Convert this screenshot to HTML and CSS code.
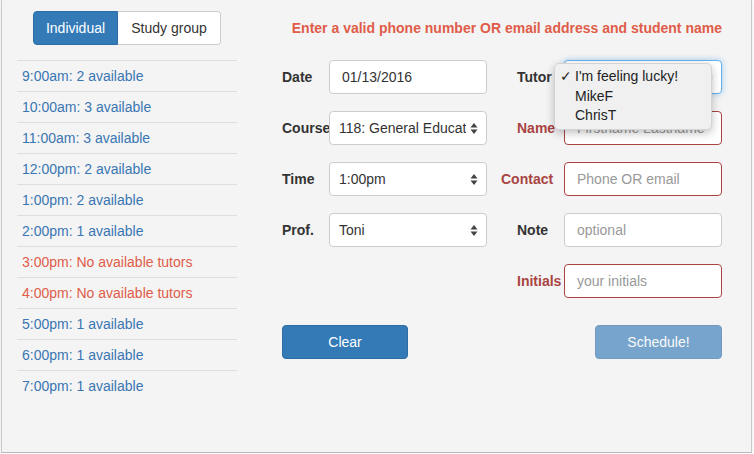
FILE: index.html
```html
<!DOCTYPE html>
<html>
<head>
<meta charset="utf-8">
<link rel="stylesheet" href="styles.css">
</head>
<body>
<div class="panel">
  <div class="sidebar">
    <div class="toggle">
      <span class="tbtn active">Individual</span>
      <span class="tbtn">Study group</span>
    </div>
    <ul class="slots">
      <li>9:00am: 2 available</li>
      <li>10:00am: 3 available</li>
      <li>11:00am: 3 available</li>
      <li>12:00pm: 2 available</li>
      <li>1:00pm: 2 available</li>
      <li>2:00pm: 1 available</li>
      <li class="none">3:00pm: No available tutors</li>
      <li class="none">4:00pm: No available tutors</li>
      <li>5:00pm: 1 available</li>
      <li>6:00pm: 1 available</li>
      <li>7:00pm: 1 available</li>
    </ul>
  </div>
  <div class="main">
    <div class="msg">Enter a valid phone number OR email address and student name</div>
    <div class="form">
      <div class="col">
        <div class="row"><label>Date</label><input class="field" type="text" value="01/13/2016"></div>
        <div class="row"><label>Course</label><div class="field select"><span class="val">118: General Educat</span><svg class="arr" width="8" height="13" viewBox="0 0 8 13"><path d="M4 1 L7.5 5.5 H0.5 Z M4 12 L7.5 7.5 H0.5 Z" fill="#444"/></svg></div></div>
        <div class="row"><label>Time</label><div class="field select"><span class="val">1:00pm</span><svg class="arr" width="8" height="13" viewBox="0 0 8 13"><path d="M4 1 L7.5 5.5 H0.5 Z M4 12 L7.5 7.5 H0.5 Z" fill="#444"/></svg></div></div>
        <div class="row"><label>Prof.</label><div class="field select"><span class="val">Toni</span><svg class="arr" width="8" height="13" viewBox="0 0 8 13"><path d="M4 1 L7.5 5.5 H0.5 Z M4 12 L7.5 7.5 H0.5 Z" fill="#444"/></svg></div></div>
      </div>
      <div class="col right">
        <div class="row tutor-row"><label>Tutor</label><div class="field select focus"><span class="val">I'm feeling lucky!</span><svg class="arr" width="8" height="13" viewBox="0 0 8 13"><path d="M4 1 L7.5 5.5 H0.5 Z M4 12 L7.5 7.5 H0.5 Z" fill="#444"/></svg></div>
          <ul class="popup">
            <li><span class="check">✓</span>I'm feeling lucky!</li>
            <li><span class="check"></span>MikeF</li>
            <li><span class="check"></span>ChrisT</li>
          </ul>
        </div>
        <div class="row err"><label>Name</label><input class="field" type="text" placeholder="Firstname Lastname"></div>
        <div class="row err"><label class="wide">Contact</label><input class="field" type="text" placeholder="Phone OR email"></div>
        <div class="row"><label>Note</label><input class="field" type="text" placeholder="optional"></div>
        <div class="row err"><label>Initials</label><input class="field" type="text" placeholder="your initials"></div>
      </div>
    </div>
    <div class="actions">
      <button class="btn">Clear</button>
      <button class="btn disabled">Schedule!</button>
    </div>
  </div>
</div>
</body>
</html>
```
FILE: styles.css
```css
* { box-sizing: border-box; }
html, body { margin: 0; padding: 0; background: #fff; }
body {
  font-family: "Liberation Sans", Arial, Helvetica, sans-serif;
  font-size: 14px;
  color: #333;
}
.panel {
  margin-left: 1px;
  width: 751px;
  height: 453px;
  background: #f4f4f4;
  border-left: 1px solid #c9c9c9;
  border-right: 1px solid #c9c9c9;
  border-bottom: 1px solid #b9b9b9;
  box-shadow: 0 1px 2px rgba(0,0,0,0.15);
  display: flex;
}
.sidebar {
  width: 220px;
  margin-left: 15px;
  padding-top: 11px;
}
.toggle {
  display: flex;
  justify-content: center;
  height: 34px;
}
.tbtn {
  display: flex;
  align-items: center;
  justify-content: center;
  height: 34px;
  border: 1px solid #ccc;
  background: #fff;
  color: #333;
}
.tbtn:first-child { width: 85px; border-radius: 4px 0 0 4px; }
.tbtn:last-child { width: 103px; border-radius: 0 4px 4px 0; border-left: none; }
.tbtn.active { background: #337ab7; border-color: #2e6da4; color: #fff; }
.slots {
  list-style: none;
  margin: 15px 0 0;
  padding: 0;
}
.slots li {
  border-top: 1px solid #ddd;
  height: 31px;
  line-height: 30px;
  padding-left: 5px;
  color: #3a76b3;
}
.slots li.none { color: #df5c49; }
.main {
  margin-left: 45px;
  width: 440px;
  padding-top: 18px;
}
.msg {
  text-align: right;
  font-weight: bold;
  color: #df5c49;
  height: 20px;
  line-height: 20px;
  white-space: nowrap;
}
.form {
  display: flex;
  gap: 30px;
  margin-top: 22px;
}
.col {
  display: flex;
  flex-direction: column;
  gap: 17px;
}
.row {
  display: flex;
  align-items: center;
  height: 34px;
  position: relative;
}
.row label {
  width: 47px;
  flex: none;
  font-weight: bold;
  white-space: nowrap;
  color: #333;
}
.row label.wide { margin-left: -16px; width: 63px; }
.row.err label { color: #a94442; }
.field {
  width: 158px;
  height: 34px;
  flex: none;
  border: 1px solid #ccc;
  border-radius: 4px;
  background: #fff;
  font-family: inherit;
  font-size: 14px;
  color: #333;
  padding: 0 12px;
  outline: none;
}
.field::placeholder { color: #999; }
.row.err .field { border-color: #a94442; }
.select {
  display: flex;
  align-items: center;
  padding: 0 8px 0 9px;
  overflow: hidden;
}
.select .val {
  flex: 1;
  overflow: hidden;
  white-space: nowrap;
  margin-right: 4px;
}
.select .arr { flex: none; }
.select.focus {
  border-color: #66afe9;
  box-shadow: 0 0 6px rgba(102,175,233,0.6);
}
.popup {
  position: absolute;
  left: 37px;
  top: 3px;
  width: 158px;
  margin: 0;
  padding: 3px 0;
  list-style: none;
  background: #f0f0f0;
  border: 1px solid #d4d4d4;
  border-radius: 5px;
  box-shadow: 0 3px 8px rgba(0,0,0,0.25);
  z-index: 5;
}
.popup li {
  height: 19.5px;
  line-height: 19.5px;
  color: #222;
  display: flex;
  white-space: nowrap;
}
.popup .check {
  width: 20px;
  padding-left: 5px;
  flex: none;
}
.actions {
  display: flex;
  justify-content: space-between;
  margin-top: 27px;
}
.btn {
  height: 34px;
  width: 126px;
  border: 1px solid #2e6da4;
  border-radius: 4px;
  background: #337ab7;
  color: #fff;
  font-family: inherit;
  font-size: 14px;
  padding: 0;
}
.btn.disabled {
  width: 127px;
  opacity: 0.65;
}
```
